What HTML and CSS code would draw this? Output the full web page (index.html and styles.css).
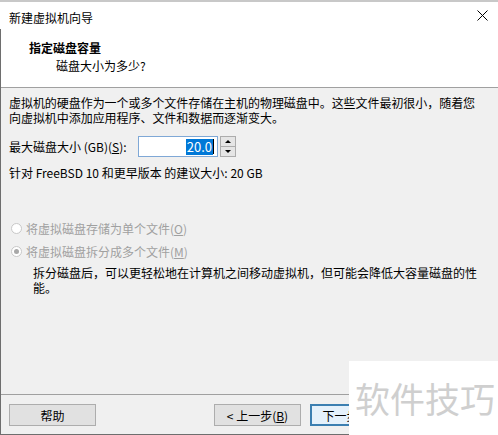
FILE: index.html
```html
<!DOCTYPE html>
<html lang="zh-CN">
<head>
    <meta charset="UTF-8">
    <title>新建虚拟机向导</title>
    <link rel="stylesheet" href="styles.css">
</head>
<body>
    <div class="topstrip"></div>
    <div class="window">
        <div class="titlebar">
            <span class="title">新建虚拟机向导</span>
            <svg class="close" width="11" height="11" viewBox="0 0 11 11">
                <path d="M0.5 0.5 L10.5 10.5 M10.5 0.5 L0.5 10.5" stroke="#000" stroke-width="1" fill="none"/>
            </svg>
        </div>
        <div class="frame">
            <div class="header">
                <div class="heading">指定磁盘容量</div>
                <div class="subheading">磁盘大小为多少?</div>
            </div>
            <div class="content">
                <p class="intro">虚拟机的硬盘作为一个或多个文件存储在主机的物理磁盘中。这些文件最初很小，随着您<br>向虚拟机中添加应用程序、文件和数据而逐渐变大。</p>
                <div class="size-row">
                    <label>最大磁盘大小 (GB)(<u>S</u>):</label>
                    <div class="spin">
                        <div class="spin-input"><span class="sel">20.0</span><span class="caret"></span></div>
                        <div class="spin-btns">
                            <div class="spin-btn"><span class="tri-up"></span></div>
                            <div class="spin-btn"><span class="tri-down"></span></div>
                        </div>
                    </div>
                </div>
                <div class="hint">针对 FreeBSD 10 和更早版本 的建议大小: 20 GB</div>
                <div class="radio disabled first">
                    <span class="dot"></span>
                    <span>将虚拟磁盘存储为单个文件(<u>O</u>)</span>
                </div>
                <div class="radio disabled checked">
                    <span class="dot"></span>
                    <span>将虚拟磁盘拆分成多个文件(<u>M</u>)</span>
                </div>
                <p class="note">拆分磁盘后，可以更轻松地在计算机之间移动虚拟机，但可能会降低大容量磁盘的性<br>能。</p>
            </div>
            <div class="footer">
                <button class="btn">帮助</button>
                <div class="nav">
                    <button class="btn">&lt; 上一步(<u>B</u>)</button>
                    <button class="btn default">下一步(<u>N</u>) &gt;</button>
                    <button class="btn">取消</button>
                </div>
            </div>
        </div>
    </div>
    <div class="watermark">软件技巧</div>
</body>
</html>
```

FILE: styles.css
```css
body {
    margin: 0;
    width: 498px;
    height: 435px;
    overflow: hidden;
    background: #f0f0f0;
    font-family: "Noto Sans CJK SC", "Microsoft YaHei", sans-serif;
    font-size: 12px;
    color: #000;
    position: relative;
}
.topstrip {
    height: 2px;
    background: #c8c8c8;
}
.window {
    display: flex;
    flex-direction: column;
    height: 433px;
}
.titlebar {
    height: 27px;
    background: #fff;
    display: flex;
    align-items: center;
    justify-content: space-between;
    padding: 0 10px 0 9px;
}
.title {
    line-height: 15px;
    margin-top: 3px;
}
.close {
    margin-top: -1px;
}
.frame {
    flex: 1;
    display: flex;
    flex-direction: column;
    border-left: 1px solid #6e6e6e;
    border-bottom: 1px solid #6e6e6e;
}
.header {
    height: 59px;
    background: #fff;
    border-bottom: 1px solid #a0a0a0;
    padding-top: 11px;
    box-sizing: border-box;
}
.heading {
    font-weight: bold;
    line-height: 15px;
    margin-left: 28px;
}
.subheading {
    line-height: 15px;
    margin-left: 55px;
    margin-top: 3px;
}
.content {
    flex: 1;
    padding: 7px 0 0 8px;
}
.intro {
    margin: 0;
    line-height: 15px;
    letter-spacing: -0.05px;
}
.size-row {
    display: flex;
    align-items: center;
    margin-top: 11px;
    height: 21px;
}
.size-row label {
    width: 129px;
}
.spin {
    display: flex;
    height: 21px;
}
.spin-input {
    width: 75px;
    height: 19px;
    border: 1px solid #7fa8d6;
    background: #fff;
    display: flex;
    justify-content: flex-end;
    align-items: center;
    padding-right: 3px;
    box-sizing: content-box;
    margin-right: 2px;
}
.sel {
    background: #0078d7;
    color: #fff;
    font-size: 13px;
    line-height: 16px;
    padding: 0 1px;
}
.caret {
    width: 1px;
    height: 15px;
    background: #000;
}
.spin-btns {
    display: flex;
    flex-direction: column;
    width: 16px;
    border: 1px solid #acacac;
    background: #e5e5e5;
    box-sizing: border-box;
}
.spin-btn {
    flex: 1;
    display: flex;
    justify-content: center;
    align-items: center;
}
.spin-btn + .spin-btn {
    border-top: 1px solid #acacac;
}
.tri-up {
    border-left: 3px solid transparent;
    border-right: 3px solid transparent;
    border-bottom: 3px solid #000;
}
.tri-down {
    border-left: 3px solid transparent;
    border-right: 3px solid transparent;
    border-top: 3px solid #000;
}
.hint {
    margin-top: 8px;
    line-height: 15px;
}
.radio {
    display: flex;
    align-items: center;
    line-height: 15px;
    margin-left: 2px;
    gap: 4px;
}
.radio.first {
    margin-top: 41px;
}
.radio + .radio {
    margin-top: 8px;
}
.radio.disabled {
    color: #a0a0a0;
}
.dot {
    width: 11px;
    height: 11px;
    border: 1px solid #c8c8c8;
    border-radius: 50%;
    background: #fff;
    box-sizing: border-box;
    display: flex;
    justify-content: center;
    align-items: center;
}
.radio.checked .dot::after {
    content: "";
    width: 5px;
    height: 5px;
    border-radius: 50%;
    background: #a8a8a8;
}
.note {
    margin: 6px 0 0 24px;
    line-height: 15px;
}
.footer {
    height: 40px;
    border-top: 1px solid #a0a0a0;
    display: flex;
    padding: 9px 0 0 8px;
    box-sizing: border-box;
}
.nav {
    display: flex;
    gap: 9px;
    margin-left: 118px;
}
.btn {
    width: 87px;
    height: 22px;
    background: #e1e1e1;
    border: 1px solid #adadad;
    font-family: inherit;
    font-size: 12px;
    color: #000;
    padding: 0;
    white-space: nowrap;
}
.btn.default {
    border: 2px solid #3c7fb1;
    background: #e5f1fb;
}
.watermark {
    position: absolute;
    left: 349px;
    top: 361px;
    width: 149px;
    height: 74px;
    background: #fff;
    color: #cfcfcf;
    font-size: 35px;
    line-height: 74px;
    padding-left: 6px;
    box-sizing: border-box;
    white-space: nowrap;
    overflow: hidden;
}
```
